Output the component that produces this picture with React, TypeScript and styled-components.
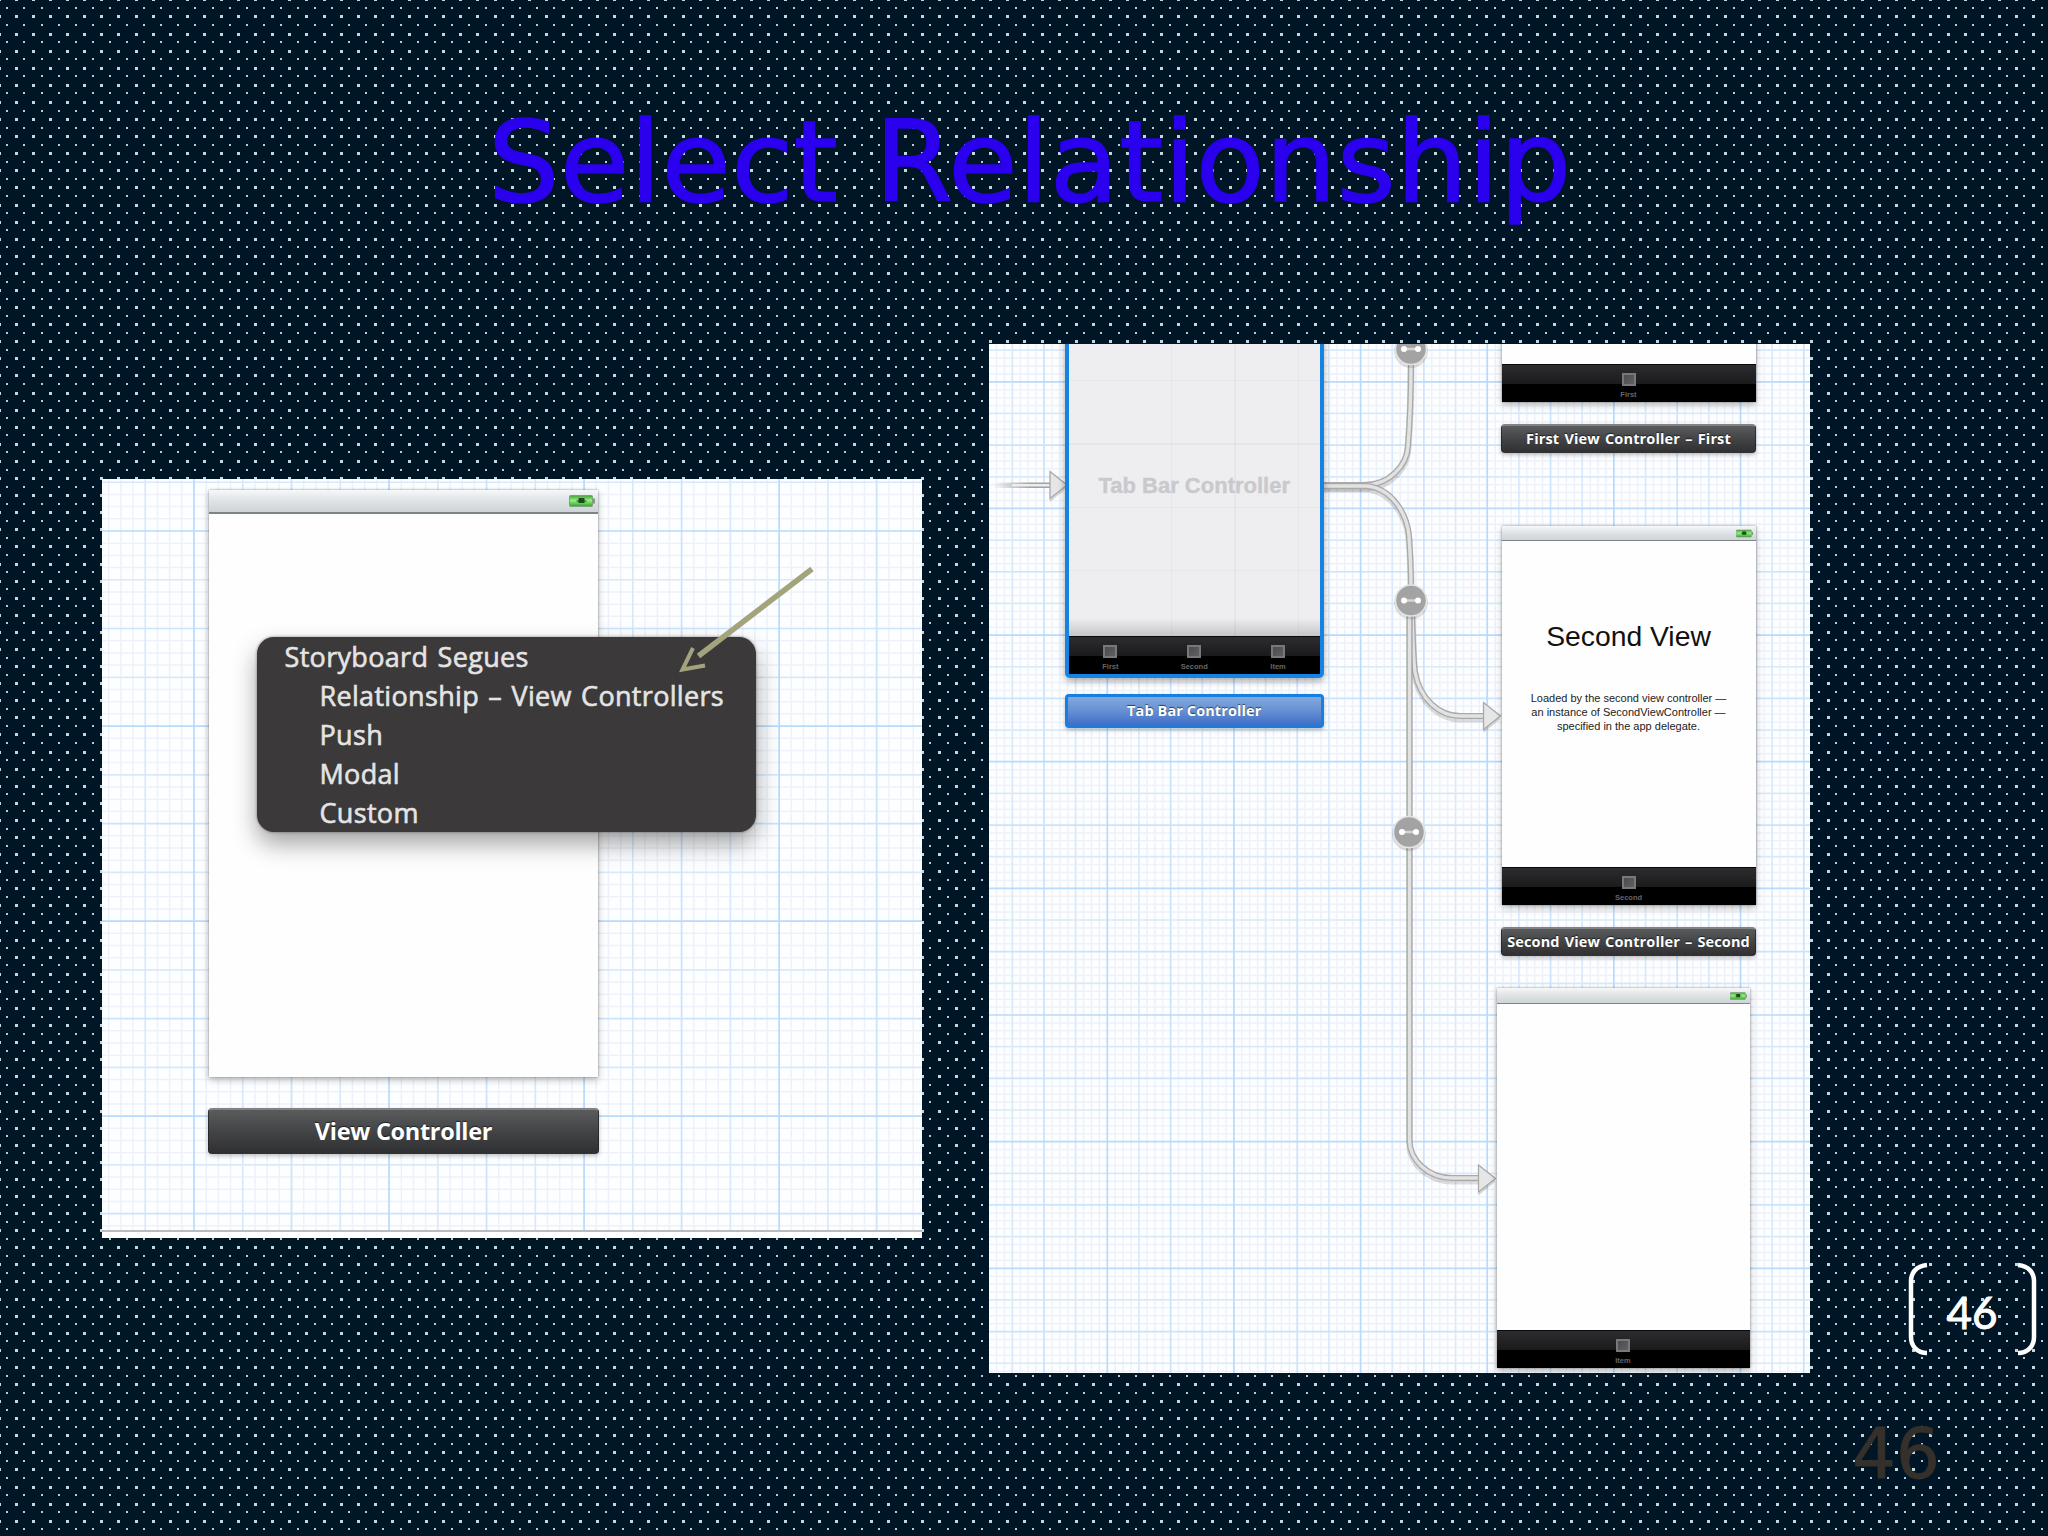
import React from "react";
import styled, { createGlobalStyle } from "styled-components";

const GlobalStyle = createGlobalStyle`
  body { margin: 0; background: #001628; }
  * { box-sizing: border-box; }
`;

const lucida = `"Open Sans", "Noto Sans", sans-serif`;
const helvetica = `"Liberation Sans", Arial, sans-serif`;
const verdana = `"DejaVu Sans", Verdana, sans-serif`;

const Slide = styled.main`
  position: relative;
  width: 2048px;
  height: 1536px;
  overflow: hidden;
  display: flex;
  flex-direction: column;
  background:
    radial-gradient(ellipse 900px 700px at 88% 50%, rgba(0, 18, 42, 0.5), transparent),
    radial-gradient(ellipse 700px 600px at 15% 85%, rgba(0, 26, 40, 0.4), transparent),
    #001626;
`;

const DotField = styled.svg`
  position: absolute;
  inset: 0;
`;

const Title = styled.h1`
  position: relative;
  margin: 0;
  height: 344px;
  padding: 96px 0 0 488px;
  font: 400 112.6px/132px ${verdana};
  letter-spacing: 0.5px;
  color: #2a00ee;
  -webkit-text-stroke: 1.6px #2a00ee;
  white-space: nowrap;
`;

const Content = styled.section`
  position: relative;
  display: flex;
  align-items: flex-start;
  padding-left: 102px;
  height: 1028px;
`;

const Canvas = styled.figure<{ $w: number; $h: number; $top?: number; $left?: number }>`
  position: relative;
  flex: none;
  width: ${(p) => p.$w}px;
  height: ${(p) => p.$h}px;
  margin: ${(p) => p.$top ?? 0}px 0 0 ${(p) => p.$left ?? 0}px;
  overflow: hidden;
  background: #fdfeff;
`;

const Layer = styled.svg<{ $shift?: number }>`
  position: absolute;
  top: 0;
  left: ${(p) => p.$shift ?? 0}px;
  overflow: visible;
`;

const Node = styled.div<{ $x: number; $y: number; $w: number; $h: number }>`
  position: absolute;
  left: ${(p) => p.$x}px;
  top: ${(p) => p.$y}px;
  width: ${(p) => p.$w}px;
  height: ${(p) => p.$h}px;
`;

const Phone = styled(Node)`
  display: flex;
  flex-direction: column;
  background: #fefefe;
  box-shadow: 0 0 2px rgba(0, 0, 0, 0.4), 0 3px 7px rgba(0, 0, 0, 0.26);
`;

const SelectedPhone = styled(Phone)`
  border: 4px solid #1583e4;
  border-radius: 0 0 5px 5px;
  background: #eeeef0;
  box-shadow: 0 3px 7px rgba(0, 0, 0, 0.35);
`;

const StatusBar = styled.div<{ $h: number }>`
  flex: none;
  display: flex;
  justify-content: flex-end;
  align-items: center;
  height: ${(p) => p.$h}px;
  padding-right: 3px;
  background: linear-gradient(#f6f8f9, #dfe3e6 50%, #cdd3d6);
  border-bottom: ${(p) => (p.$h > 20 ? 2 : 1)}px solid #7d8588;
`;

const PhoneBody = styled.div`
  flex: 1;
  display: flex;
  flex-direction: column;
  align-items: center;
`;

const GhostBody = styled(PhoneBody)`
  background:
    linear-gradient(to top, rgba(0, 0, 0, 0.17), transparent 18px),
    repeating-linear-gradient(90deg, transparent 0 62px, rgba(180, 185, 205, 0.14) 62px 63.3px) 40px 0,
    repeating-linear-gradient(transparent 0 62px, rgba(180, 185, 205, 0.14) 62px 63.3px) 0 -10px;
`;

const GhostTitle = styled.div`
  margin-top: 145px;
  font: 700 22px/26px ${helvetica};
  color: #c9c9cd;
  -webkit-text-stroke: 0.4px #c9c9cd;
  white-space: nowrap;
`;

const TabBar = styled.div`
  flex: none;
  display: flex;
  justify-content: space-around;
  height: 38px;
  background: linear-gradient(#2c2b2e, #1b1b1d 50%, #000 52%);
  border-top: 1px solid #08080a;
`;

const TabItem = styled.div`
  display: flex;
  flex-direction: column;
  align-items: center;
  gap: 5px;
  width: 83px;
  padding-top: 8px;
  font: 700 7.5px/8px ${helvetica};
  color: #666668;
`;

const TabIcon = styled.i`
  width: 14px;
  height: 13px;
  background: linear-gradient(135deg, #4c4c4e, #606062);
  border: 2px solid #78787a;
`;

const NamePlate = styled(Node)<{ $size: number; $spacing?: number; $gap?: number; $selected?: boolean }>`
  display: flex;
  align-items: center;
  justify-content: center;
  border-radius: 4px;
  border: ${(p) => (p.$selected ? "3px solid #1580e2" : "1px solid rgba(30,30,30,.65)")};
  border-top: ${(p) => (p.$selected ? "" : "2px solid #808284")};
  background: ${(p) =>
    p.$selected ? "linear-gradient(#83a9dc, #6690d3 50%, #3e6fc9)" : "linear-gradient(#595b5d, #434446 50%, #303032)"};
  box-shadow: 0 2px 4px rgba(0, 0, 0, 0.25);
  font: 700 ${(p) => p.$size}px/1 ${lucida};
  letter-spacing: ${(p) => p.$spacing ?? 0}px;
  word-spacing: ${(p) => p.$gap ?? 0}px;
  color: #fff;
  text-shadow: 0 -1px 1px rgba(0, 0, 0, 0.6);
  white-space: nowrap;
`;

const SecondTitle = styled.div`
  margin-top: 79px;
  font: 400 28.3px/32px ${helvetica};
  color: #111;
  white-space: nowrap;
`;

const SecondText = styled.p`
  margin: 39px 0 0;
  font: 400 11px/14.2px ${helvetica};
  color: #222;
  text-align: center;
  white-space: nowrap;
`;

const SegueMenu = styled(Node)`
  display: flex;
  flex-direction: column;
  border-radius: 17px;
  background: #3b393a;
  box-shadow: 0 0 3px rgba(0, 0, 0, 0.45), 0 12px 24px rgba(0, 0, 0, 0.36);
  font: 400 27px/39px ${lucida};
  letter-spacing: 0.32px;
  word-spacing: 2px;
  color: #e4e4e4;
  -webkit-text-stroke: 0.6px #e4e4e4;
  white-space: nowrap;
`;

const MenuRow = styled.div<{ $indent?: boolean }>`
  padding-left: ${(p) => (p.$indent ? 63 : 28)}px;
  height: 39px;
`;

const CanvasEdge = styled.div`
  position: absolute;
  inset: auto 0 0;
  height: 8px;
  background: #fff;
  border-top: 2px solid #b9bbbd;
`;

const Badge = styled.aside`
  position: relative;
  flex: none;
  display: flex;
  align-items: center;
  justify-content: center;
  width: 127px;
  height: 92px;
  margin: 919px 0 0 99px;
  padding: 5px 0 0 0;
  font: 400 44px/52px Lato, Carlito, sans-serif;
  color: #fff;
  -webkit-text-stroke: 0.9px #fff;
`;

const Footer = styled.footer`
  position: relative;
  display: flex;
  padding: 42px 0 0 1852px;
  font: 400 69px/80px ${verdana};
  color: #35302a;
  -webkit-text-stroke: 0.8px #35302a;
`;

const PITCH = 17.094;

function dotPath(offsetX: number, offsetY: number, size: number) {
  let d = "";
  for (let r = 0; r < 92; r++)
    for (let c = 0; c < 122; c++) {
      const x = Math.round(c * PITCH + offsetX);
      const y = Math.round(r * PITCH + offsetY);
      d += `M${x} ${y}h${size}v${size}h-${size}z`;
    }
  return d;
}

const largeDots = dotPath(-2.2, -1.6, 3);
const smallDots = dotPath(6.4, 7, 2);

function Dots() {
  return (
    <DotField width={2048} height={1536} shapeRendering="crispEdges">
      <path d={largeDots} fill="#c0d9de" />
      <path d={smallDots} fill="#b4d0d6" />
    </DotField>
  );
}

function Graph({ w, h, x0, y0, step }: { w: number; h: number; x0: number; y0: number; step: number }) {
  const tone = (i: number) =>
    i % 16 === 0 ? "#b9dafb" : i % 8 === 0 ? "#cbe3fb" : i % 4 === 0 ? "#dae9fa" : "#eef1fa";
  const order = (i: number) => (i % 16 === 0 ? 3 : i % 8 === 0 ? 2 : i % 4 === 0 ? 1 : 0);
  const lines: { k: number; el: React.ReactElement }[] = [];
  for (let i = -48; i < 160; i++) {
    const sw = i % 4 === 0 ? 1.7 : 1.5;
    const x = x0 + i * step;
    const y = y0 + i * step;
    if (x >= 0 && x <= w)
      lines.push({ k: order(i), el: <line key={`v${i}`} x1={x} x2={x} y1={0} y2={h} stroke={tone(i)} strokeWidth={sw} /> });
    if (y >= 0 && y <= h)
      lines.push({ k: order(i), el: <line key={`h${i}`} x1={0} x2={w} y1={y} y2={y} stroke={tone(i)} strokeWidth={sw} /> });
  }
  return (
    <Layer width={w} height={h}>
      {lines.sort((a, b) => a.k - b.k).map((l) => l.el)}
    </Layer>
  );
}

function Battery({ w, h }: { w: number; h: number }) {
  return (
    <svg width={w} height={h} viewBox="0 0 26 12">
      <defs>
        <linearGradient id="charge" x2="0" y2="1">
          <stop offset="0" stopColor="#4d9a45" />
          <stop offset=".45" stopColor="#8df577" />
          <stop offset="1" stopColor="#3c9a35" />
        </linearGradient>
      </defs>
      <rect x=".5" y=".5" width="23" height="11" rx="1" fill="url(#charge)" stroke="#79a577" />
      <rect x="24" y="3.5" width="2" height="5" fill="#8a948c" />
      <path d="M9.500 3H15.500V5.500H17.500V6.500H15.500V8H9.500V6.500H7.500V5.500H9.500z" fill="#1c4a1a" />
    </svg>
  );
}

function Tab({ label }: { label: string }) {
  return (
    <TabItem>
      <TabIcon />
      {label}
    </TabItem>
  );
}

function Wire({ d }: { d: string }) {
  return (
    <g fill="none">
      <path d={d} stroke="#000" strokeOpacity=".13" strokeWidth="7" transform="translate(0 3)" />
      <path d={d} stroke="#a9a9a9" strokeWidth="6" />
      <path d={d} stroke="#e2e2e2" strokeWidth="3.4" />
    </g>
  );
}

function Joint({ x, y }: { x: number; y: number }) {
  return (
    <g transform={`translate(${x} ${y})`}>
      <circle cy="2" r="17" fill="#000" fillOpacity=".12" />
      <circle r="15.500" fill="#a3a3a3" stroke="#e4e4e4" strokeWidth="1.500" />
      <path d="M-7 0H7" stroke="#d6d6d6" strokeWidth="2.500" />
      <circle cx="-7" r="3" fill="#fff" />
      <circle cx="7" r="3" fill="#fff" />
    </g>
  );
}

function Head({ x, y }: { x: number; y: number }) {
  return (
    <g transform={`translate(${x} ${y})`}>
      <path d="M-17 -10L0 3L-17 17z" fill="#000" fillOpacity=".15" />
      <path d="M-17 -13.500L0 0L-17 13.500z" fill="#e6e6e6" stroke="#a9a9a9" strokeWidth="1.300" />
    </g>
  );
}

function SegueCanvas() {
  return (
    <Canvas $w={820} $h={759} $top={135}>
      <Graph w={820} h={759} x0={92} y0={52} step={12.19} />
      <Phone $x={107} $y={11} $w={389} $h={587}>
        <StatusBar $h={24}>
          <Battery w={26} h={12} />
        </StatusBar>
      </Phone>
      <NamePlate $x={106} $y={629} $w={391} $h={46} $size={23.5} $spacing={-0.3}>
        View Controller
      </NamePlate>
      <SegueMenu $x={154.5} $y={158} $w={499} $h={195}>
        <MenuRow>Storyboard Segues</MenuRow>
        <MenuRow $indent>Relationship – View Controllers</MenuRow>
        <MenuRow $indent>Push</MenuRow>
        <MenuRow $indent>Modal</MenuRow>
        <MenuRow $indent>Custom</MenuRow>
      </SegueMenu>
      <Layer $shift={1} width={819} height={758} fill="none" stroke="#a3a47c">
        <path d="M709 90L595.500 177" strokeWidth="5.500" />
        <path d="M590 169L579.500 190.500L602 186.500" strokeWidth="4" />
      </Layer>
      <CanvasEdge />
    </Canvas>
  );
}

function FlowCanvas() {
  return (
    <Canvas $w={820.5} $h={1028.5} $left={67}>
      <Graph w={821} h={1029} x0={118.3} y0={37.8} step={7.915} />
      <Layer $shift={1} width={820} height={1028}>
        <defs>
          <linearGradient id="entry" gradientUnits="userSpaceOnUse" x1="3" x2="40" y1="0" y2="0">
            <stop offset="0" stopColor="#a3a3a3" stopOpacity="0" />
            <stop offset="1" stopColor="#a3a3a3" />
          </linearGradient>
        </defs>
        <path d="M3 138.500H62V144H3z" fill="url(#entry)" />
        <path d="M22 140H62V142.500H22z" fill="#ececec" />
        <Head x={77} y={141} />
        <Wire d="M334 141H374C400 141 417 121 418 102C420 76 421 56 421 20" />
        <Wire d="M334 142H376C402 144 417 170 419 192C420 206 421 226 421 244" />
        <Wire d="M422 270C423 296 423 312 425 328C430 356 450 372 470 372H494" />
        <Wire d="M419.500 270V796C419.500 816 438 834 462 834H490" />
        <Joint x={421} y={5} />
        <Joint x={421} y={256.5} />
        <Joint x={419} y={488} />
        <Head x={510.5} y={372} />
        <Head x={505.5} y={834.5} />
      </Layer>
      <SelectedPhone $x={75.5} $y={-20} $w={259.5} $h={354}>
        <GhostBody>
          <GhostTitle>Tab Bar Controller</GhostTitle>
        </GhostBody>
        <TabBar>
          <Tab label="First" />
          <Tab label="Second" />
          <Tab label="Item" />
        </TabBar>
      </SelectedPhone>
      <NamePlate $x={75.5} $y={350} $w={259.5} $h={34} $size={14.5} $spacing={0.1} $selected>
        Tab Bar Controller
      </NamePlate>
      <Phone $x={512.5} $y={-40} $w={254} $h={98}>
        <PhoneBody />
        <TabBar>
          <Tab label="First" />
        </TabBar>
      </Phone>
      <NamePlate $x={512} $y={80} $w={255} $h={29} $size={14.5} $spacing={0.15} $gap={1.2}>
        First View Controller – First
      </NamePlate>
      <Phone $x={512.5} $y={182} $w={254} $h={379}>
        <StatusBar $h={15}>
          <Battery w={17} h={9} />
        </StatusBar>
        <PhoneBody>
          <SecondTitle>Second View</SecondTitle>
          <SecondText>
            Loaded by the second view controller —<br />
            an instance of SecondViewController —<br />
            specified in the app delegate.
          </SecondText>
        </PhoneBody>
        <TabBar>
          <Tab label="Second" />
        </TabBar>
      </Phone>
      <NamePlate $x={512} $y={583} $w={255} $h={29} $size={14.5} $spacing={0.12} $gap={1.2}>
        Second View Controller – Second
      </NamePlate>
      <Phone $x={507.5} $y={644} $w={253} $h={380}>
        <StatusBar $h={16}>
          <Battery w={17} h={8} />
        </StatusBar>
        <PhoneBody />
        <TabBar>
          <Tab label="Item" />
        </TabBar>
      </Phone>
    </Canvas>
  );
}

export default function App() {
  return (
    <>
      <GlobalStyle />
      <Slide>
        <Dots />
        <Title>Select Relationship</Title>
        <Content>
          <SegueCanvas />
          <FlowCanvas />
          <Badge>
            <Layer width={127} height={92} fill="none" stroke="#fff" strokeWidth={4.5}>
              <path d="M18 2C7 3 2 10 2 18V74C2 83 8 90 18 90" />
              <path d="M109 2C120 3 125 10 125 18V74C125 83 119 90 109 90" />
            </Layer>
            46
          </Badge>
        </Content>
        <Footer>46</Footer>
      </Slide>
    </>
  );
}
